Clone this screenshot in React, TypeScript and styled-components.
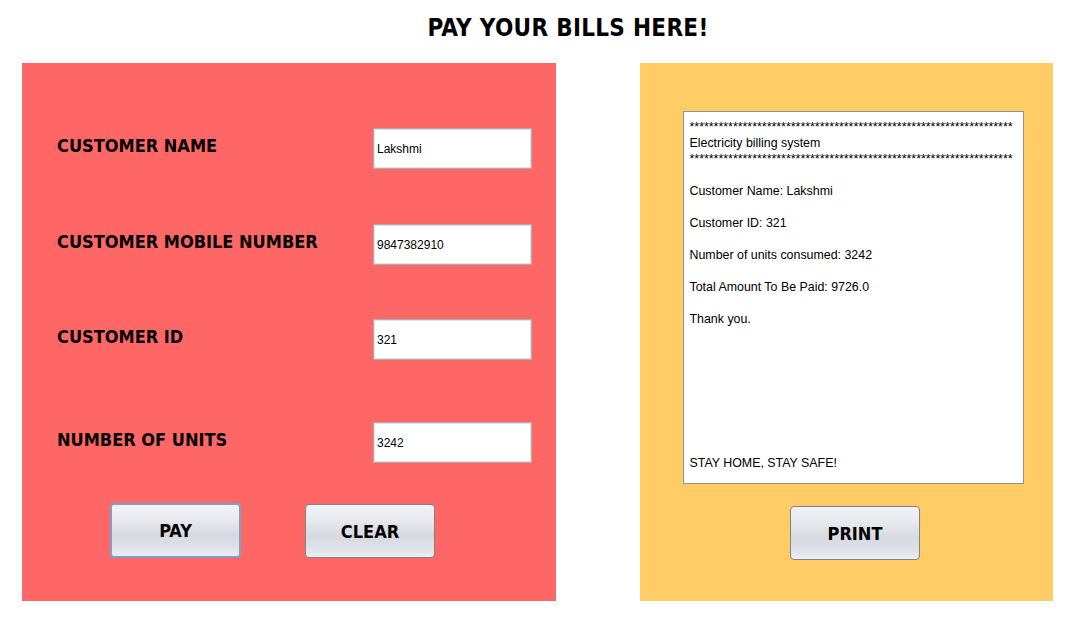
import React from "react";
import styled, { createGlobalStyle } from "styled-components";

const GlobalStyle = createGlobalStyle`
  html, body { margin: 0; padding: 0; background: #ffffff; }
  body { font-family: "Liberation Sans", Arial, sans-serif; }
  * { box-sizing: border-box; }
`;

const Page = styled.div`
  width: 1068px;
  height: 621px;
  background: #ffffff;
`;

const Header = styled.header`
  height: 63px;
  padding-left: 68px;
  text-align: center;
`;

const Title = styled.h1`
  margin: 0;
  font-family: "DejaVu Sans Condensed", "DejaVu Sans", sans-serif;
  font-stretch: condensed;
  font-weight: bold;
  font-size: 24px;
  letter-spacing: 0.3px;
  line-height: 57px;
  color: #000;
`;

const Panels = styled.main`
  display: flex;
  padding-left: 22px;
  gap: 84px;
`;

const FormPanel = styled.section`
  width: 534px;
  height: 538px;
  background: #ff6666;
  padding-top: 65px;
  display: flex;
  flex-direction: column;
`;

const FieldRow = styled.div<{ $top: number }>`
  display: flex;
  align-items: center;
  justify-content: space-between;
  padding: 0 24px 0 35px;
  margin-top: ${(p) => p.$top}px;
  height: 41px;
`;

const Label = styled.label`
  font-family: "DejaVu Sans Condensed", "DejaVu Sans", sans-serif;
  font-stretch: condensed;
  font-weight: bold;
  font-size: 18px;
  line-height: 20px;
  color: #000;
  margin-bottom: 5px;
`;

const Field = styled.div`
  width: 159px;
  height: 41px;
  background: #ffffff;
  border: 1px solid #adadad;
  box-shadow: inset 0 0 0 1px #e2e2e2;
  padding: 0 3px;
  display: flex;
  align-items: center;
  font-family: "Liberation Sans", Arial, sans-serif;
  font-size: 12px;
  color: #000;
`;

const ButtonRow = styled.div`
  display: flex;
  gap: 64px;
  padding-left: 88px;
  margin-top: 40px;
`;

const Button = styled.button<{ $focused?: boolean }>`
  width: ${(p) => (p.$focused ? 131 : 130)}px;
  height: ${(p) => (p.$focused ? 55 : 54)}px;
  margin-top: ${(p) => (p.$focused ? 0 : 1)}px;
  border-radius: 4px;
  border: ${(p) => (p.$focused ? "2px solid #7f9fc6" : "1px solid #7e838a")};
  background: linear-gradient(
    to bottom,
    #f2f3f6 0%,
    #e6e8ec 30%,
    #d6d9df 60%,
    #dfe2e8 85%,
    #eceef3 100%
  );
  font-family: "DejaVu Sans Condensed", "DejaVu Sans", sans-serif;
  font-stretch: condensed;
  font-weight: bold;
  font-size: 18px;
  color: #000;
  padding: 0;
  cursor: pointer;
`;

const ReceiptPanel = styled.section`
  width: 413px;
  height: 538px;
  background: #ffcc66;
  padding: 48px 30px 0 43px;
  display: flex;
  flex-direction: column;
  align-items: center;
`;

const Receipt = styled.pre`
  margin: 0;
  width: 341px;
  height: 373px;
  background: #ffffff;
  border: 1px solid #8f9499;
  padding: 7px 6px;
  font-family: "Liberation Sans", Arial, sans-serif;
  font-size: 12.4px;
  line-height: 16px;
  color: #000;
  overflow: hidden;
  white-space: pre;
`;

const PrintButton = styled(Button)`
  margin-top: 22px;
  margin-left: 4px;
`;

const stars = "*".repeat(67);

const receiptText = [
  stars,
  "Electricity billing system",
  stars,
  "",
  "Customer Name: Lakshmi",
  "",
  "Customer ID: 321",
  "",
  "Number of units consumed: 3242",
  "",
  "Total Amount To Be Paid: 9726.0",
  "",
  "Thank you.",
  "",
  "",
  "",
  "",
  "",
  "",
  "",
  "",
  "STAY HOME, STAY SAFE!",
].join("\n");

const fields = [
  { label: "CUSTOMER NAME", value: "Lakshmi", top: 0 },
  { label: "CUSTOMER MOBILE NUMBER", value: "9847382910", top: 55 },
  { label: "CUSTOMER ID", value: "321", top: 54 },
  { label: "NUMBER OF UNITS", value: "3242", top: 62 },
];

export default function App() {
  return (
    <Page>
      <GlobalStyle />
      <Header>
        <Title>PAY YOUR BILLS HERE!</Title>
      </Header>
      <Panels>
        <FormPanel>
          {fields.map((f) => (
            <FieldRow key={f.label} $top={f.top}>
              <Label>{f.label}</Label>
              <Field>{f.value}</Field>
            </FieldRow>
          ))}
          <ButtonRow>
            <Button $focused>PAY</Button>
            <Button>CLEAR</Button>
          </ButtonRow>
        </FormPanel>
        <ReceiptPanel>
          <Receipt>{receiptText}</Receipt>
          <PrintButton>PRINT</PrintButton>
        </ReceiptPanel>
      </Panels>
    </Page>
  );
}
